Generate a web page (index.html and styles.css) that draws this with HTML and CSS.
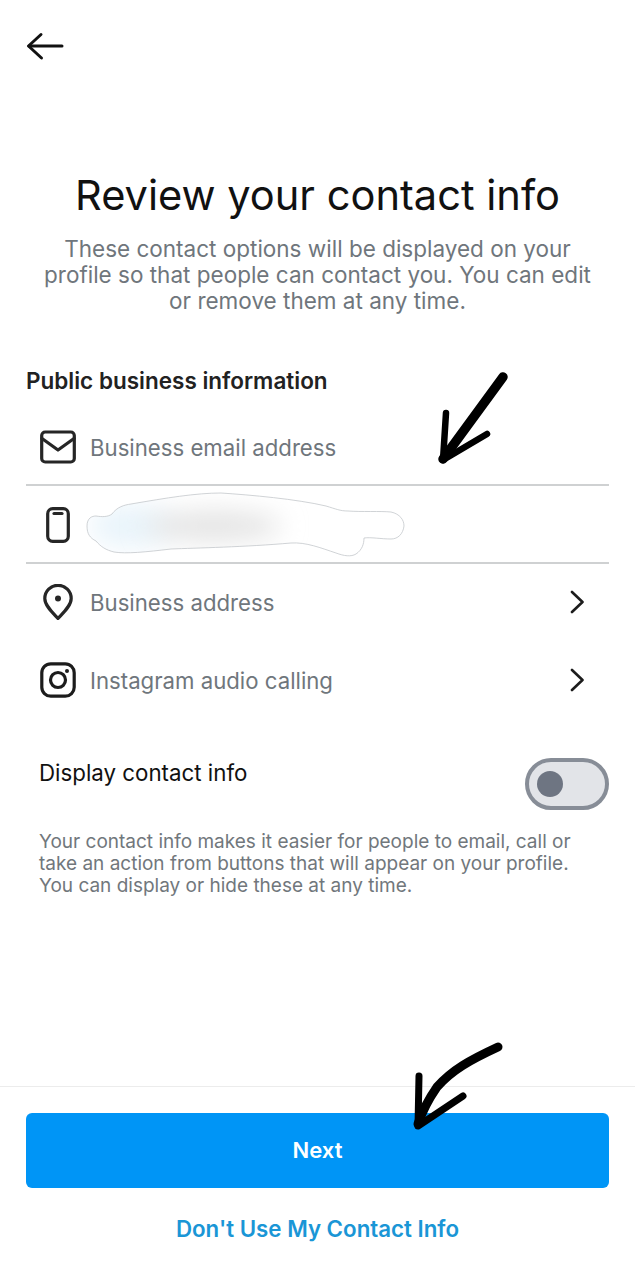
FILE: index.html
```html
<!DOCTYPE html>
<html lang="en">
<head>
<meta charset="utf-8">
<title>Review your contact info</title>
<link rel="stylesheet" href="styles.css">
</head>
<body>
<div class="page">
  <header class="topbar">
    <svg class="back" width="38" height="30" viewBox="0 0 38 30" fill="none" stroke="#111" stroke-width="3" stroke-linecap="round" stroke-linejoin="round"><path d="M36 15H3"/><path d="M15 3.500L2.500 15 15.500 27"/></svg>
  </header>
  <main class="content">
    <h1 class="title">Review your contact info</h1>
    <p class="intro">These contact options will be displayed on your profile so that people can contact you. You can edit or remove them at any time.</p>
    <h2 class="section">Public business information</h2>
    <div class="rows">
      <div class="row row-line">
        <span class="icon"><svg width="36" height="34" viewBox="0 0 36 34" fill="none" stroke="#262626" stroke-width="3.200" stroke-linejoin="round" stroke-linecap="round"><rect x="1.700" y="2" width="32.600" height="30" rx="3.500"/><path d="M2 8.500L18 20 34 8.500"/></svg></span>
        <span class="label">Business email address</span>
      </div>
      <div class="row row-line">
        <span class="icon"><svg width="24" height="36" viewBox="0 0 24 36" fill="none" stroke="#262626" stroke-width="3.200" stroke-linecap="round"><rect x="1.700" y="1.700" width="20.600" height="32.600" rx="5"/><path d="M8 6.500H16"/></svg></span>
        <svg class="blur" width="320" height="66" viewBox="0 0 320 66">
          <defs>
            <filter id="soft" x="-40%" y="-100%" width="180%" height="300%"><feGaussianBlur stdDeviation="13"/></filter>
            <clipPath id="blob"><path d="M1 34C1 26 6 24 10 24 16 25 22 25 26 22 31 15 38 13 45 12 80 6 110 1 135 1 165 3 210 7 240 14 250 17 254 19 262 19 275 20 295 19 305 20 314 22 318 28 318 34 317 42 312 47 305 47 295 47 285 45 278 46 278 52 276 58 270 62 265 65 258 64 250 61 235 56 220 50 205 51 160 55 110 56 85 57 60 60 40 62 28 60 20 58 15 55 10 49 4 46 1 42 1 34Z"/></clipPath>
          </defs>
          <g clip-path="url(#blob)">
            <ellipse cx="45" cy="34" rx="42" ry="22" fill="#e9f4fb" filter="url(#soft)"/>
            <ellipse cx="128" cy="34" rx="68" ry="15" fill="#e3e3e3" filter="url(#soft)"/>
          </g>
          <path d="M1 34C1 26 6 24 10 24 16 25 22 25 26 22 31 15 38 13 45 12 80 6 110 1 135 1 165 3 210 7 240 14 250 17 254 19 262 19 275 20 295 19 305 20 314 22 318 28 318 34 317 42 312 47 305 47 295 47 285 45 278 46 278 52 276 58 270 62 265 65 258 64 250 61 235 56 220 50 205 51 160 55 110 56 85 57 60 60 40 62 28 60 20 58 15 55 10 49 4 46 1 42 1 34Z" fill="none" stroke="#c4c8cb" stroke-width=".8"/>
        </svg>
      </div>
      <div class="row">
        <span class="icon"><svg width="30" height="36" viewBox="0 0 30 36" fill="none" stroke="#262626" stroke-width="3.200" stroke-linejoin="round"><path d="M15 34.500C9 28 1.800 21.500 1.800 14.500A13.200 13.200 0 0 1 28.200 14.500C28.200 21.500 21 28 15 34.500Z"/><circle cx="15" cy="14.500" r="3" fill="#262626" stroke="none"/></svg></span>
        <span class="label">Business address</span>
        <svg class="chev" width="14" height="24" viewBox="0 0 14 24" fill="none" stroke="#1c1c1c" stroke-width="2.600" stroke-linecap="round" stroke-linejoin="round"><path d="M2 2L12.500 12 2 22"/></svg>
      </div>
      <div class="row">
        <span class="icon"><svg width="36" height="36" viewBox="0 0 36 36" fill="none" stroke="#1c1c1c" stroke-width="3.200"><rect x="1.800" y="1.800" width="32.400" height="32.400" rx="9"/><circle cx="18" cy="18" r="7.500"/><circle cx="27" cy="9" r="2" fill="#1c1c1c" stroke="none"/></svg></span>
        <span class="label">Instagram audio calling</span>
        <svg class="chev" width="14" height="24" viewBox="0 0 14 24" fill="none" stroke="#1c1c1c" stroke-width="2.600" stroke-linecap="round" stroke-linejoin="round"><path d="M2 2L12.500 12 2 22"/></svg>
      </div>
    </div>
    <div class="display">
      <span class="display-label">Display contact info</span>
      <span class="toggle"><span class="knob"></span></span>
    </div>
    <p class="note">Your contact info makes it easier for people to email, call or take an action from buttons that will appear on your profile. You can display or hide these at any time.</p>
  </main>
  <footer class="footer">
    <button class="next" type="button">Next</button>
    <a class="skip" href="#">Don't Use My Contact Info</a>
  </footer>
  <svg class="marks" width="635" height="1280" viewBox="0 0 635 1280" fill="none" stroke="#000" stroke-linecap="round" stroke-linejoin="round">
    <path d="M503 377L443 459" stroke-width="9.500"/>
    <path d="M446 413L443 460 487 434" stroke-width="6.500"/>
    <path d="M498 1047C470 1060 452 1070 437 1087 428 1100 422 1112 418 1124" stroke-width="9"/>
    <path d="M419 1076L418 1126 463 1096" stroke-width="7"/>
  </svg>
</div>
</body>
</html>
```
FILE: styles.css
```css
* { box-sizing: border-box; }
html, body { margin: 0; padding: 0; background: #fff; }
body { font-family: Inter, "Liberation Sans", sans-serif; color: #111; }
.page { position: relative; width: 635px; height: 1280px; display: flex; flex-direction: column; overflow: hidden; }
.topbar { height: 173px; padding: 31px 0 0 26px; flex: none; }
.back { display: block; }
.content { flex: 1; padding: 0 26px; }
.title { margin: 0; font-size: 41.600px; line-height: 44px; font-weight: 400; text-align: center; color: #111; }
.intro { margin: 19px 0 0; padding: 0 14px; font-size: 22.500px; line-height: 26px; text-align: center; color: #6f767c; }
.section { margin: 53px 0 0; font-size: 22.500px; line-height: 28px; font-weight: 600; color: #222; }
.rows { margin-top: 13px; }
.row { height: 78px; display: flex; align-items: center; padding-right: 25px; padding-bottom: 2px; }
.row-line { border-bottom: 2px solid #cfd1d2; padding-top: 2px; padding-bottom: 0; }
.icon { width: 64px; padding-left: 14px; padding-right: 14px; flex: none; display: flex; justify-content: center; }
.label { flex: 1; font-size: 22.200px; color: #6f767c; }
.chev { flex: none; }
.blur { flex: none; margin-left: -4px; }
.display { margin-top: 38px; padding-left: 13px; display: flex; justify-content: space-between; align-items: flex-start; height: 52px; }
.display-label { font-size: 22.300px; line-height: 30px; color: #111; }
.toggle { width: 84px; height: 52px; border: 4px solid #878d97; border-radius: 26px; background: #e2e4e8; display: flex; align-items: center; padding-left: 8px; }
.knob { width: 26px; height: 26px; border-radius: 50%; background: #6e7582; }
.note { margin: 21px 0 0; padding: 0 13px; font-size: 19px; line-height: 22px; color: #71777c; }
.footer { flex: none; height: 194px; border-top: 1px solid #ececec; padding: 26px 26px 0; display: flex; flex-direction: column; align-items: stretch; }
.next { height: 75px; border: 0; border-radius: 6px; background: #0095f6; color: #fff; font: 600 22px Inter, "Liberation Sans", sans-serif; padding: 0 0 1px; }
.skip { margin-top: 27px; text-align: center; font-size: 22.300px; line-height: 28px; font-weight: 600; color: #1a96d6; text-decoration: none; }
.marks { position: absolute; left: 0; top: 0; pointer-events: none; }
```
